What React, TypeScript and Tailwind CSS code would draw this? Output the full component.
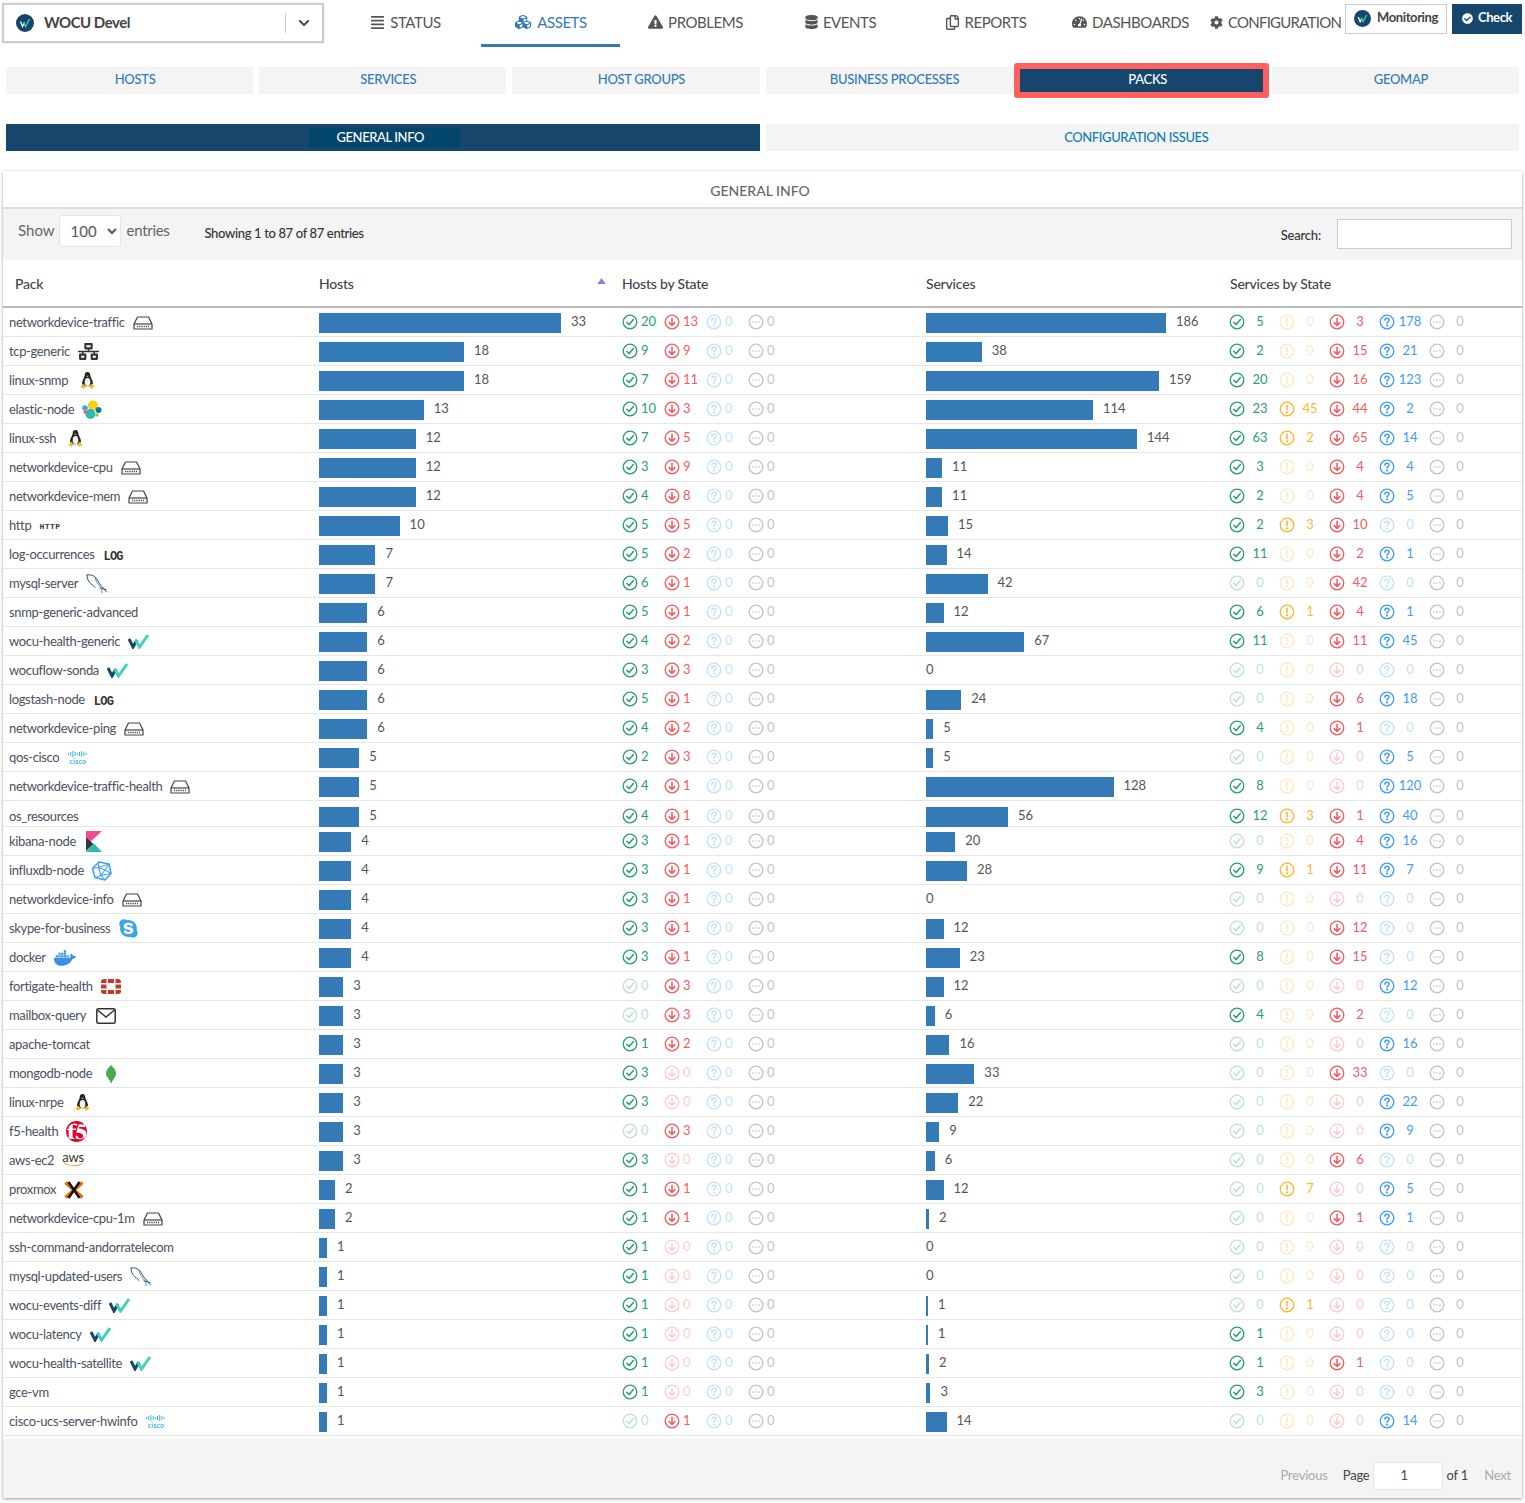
import type { ReactNode } from 'react';
import {
  FaAlignJustify,
  FaCubes,
  FaExclamationTriangle,
  FaDatabase,
  FaRegCopy,
  FaTachometerAlt,
  FaCog,
  FaCheckCircle,
  FaChevronDown,
  FaNetworkWired,
  FaSkype,
  FaDocker,
} from 'react-icons/fa';
import { SiF5 } from 'react-icons/si';

type Pack = {
  name: string;
  icon?: string;
  hosts: number;
  up: number;
  down: number;
  services: number;
  st: [number, number, number, number];
};

const row = (
  name: string,
  icon: string,
  hosts: number,
  up: number,
  down: number,
  services: number,
  ok = 0,
  warn = 0,
  crit = 0,
  unk = 0
): Pack => ({ name, icon, hosts, up, down, services, st: [ok, warn, crit, unk] });

const packs: Pack[] = [
  row('networkdevice-traffic', 'device', 33, 20, 13, 186, 5, 0, 3, 178),
  row('tcp-generic', 'network', 18, 9, 9, 38, 2, 0, 15, 21),
  row('linux-snmp', 'tux', 18, 7, 11, 159, 20, 0, 16, 123),
  row('elastic-node', 'elastic', 13, 10, 3, 114, 23, 45, 44, 2),
  row('linux-ssh', 'tux', 12, 7, 5, 144, 63, 2, 65, 14),
  row('networkdevice-cpu', 'device', 12, 3, 9, 11, 3, 0, 4, 4),
  row('networkdevice-mem', 'device', 12, 4, 8, 11, 2, 0, 4, 5),
  row('http', 'http', 10, 5, 5, 15, 2, 3, 10, 0),
  row('log-occurrences', 'log', 7, 5, 2, 14, 11, 0, 2, 1),
  row('mysql-server', 'mysql', 7, 6, 1, 42, 0, 0, 42, 0),
  row('snmp-generic-advanced', '', 6, 5, 1, 12, 6, 1, 4, 1),
  row('wocu-health-generic', 'wocu', 6, 4, 2, 67, 11, 0, 11, 45),
  row('wocuflow-sonda', 'wocu', 6, 3, 3, 0),
  row('logstash-node', 'log', 6, 5, 1, 24, 0, 0, 6, 18),
  row('networkdevice-ping', 'device', 6, 4, 2, 5, 4, 0, 1, 0),
  row('qos-cisco', 'cisco', 5, 2, 3, 5, 0, 0, 0, 5),
  row('networkdevice-traffic-health', 'device', 5, 4, 1, 128, 8, 0, 0, 120),
  row('os_resources', '', 5, 4, 1, 56, 12, 3, 1, 40),
  row('kibana-node', 'kibana', 4, 3, 1, 20, 0, 0, 4, 16),
  row('influxdb-node', 'influx', 4, 3, 1, 28, 9, 1, 11, 7),
  row('networkdevice-info', 'device', 4, 3, 1, 0),
  row('skype-for-business', 'skype', 4, 3, 1, 12, 0, 0, 12, 0),
  row('docker', 'docker', 4, 3, 1, 23, 8, 0, 15, 0),
  row('fortigate-health', 'fortigate', 3, 0, 3, 12, 0, 0, 0, 12),
  row('mailbox-query', 'mail', 3, 0, 3, 6, 4, 0, 2, 0),
  row('apache-tomcat', '', 3, 1, 2, 16, 0, 0, 0, 16),
  row('mongodb-node', 'leaf', 3, 3, 0, 33, 0, 0, 33, 0),
  row('linux-nrpe', 'tux', 3, 3, 0, 22, 0, 0, 0, 22),
  row('f5-health', 'f5', 3, 0, 3, 9, 0, 0, 0, 9),
  row('aws-ec2', 'aws', 3, 3, 0, 6, 0, 0, 6, 0),
  row('proxmox', 'proxmox', 2, 1, 1, 12, 0, 7, 0, 5),
  row('networkdevice-cpu-1m', 'device', 2, 1, 1, 2, 0, 0, 1, 1),
  row('ssh-command-andorratelecom', '', 1, 1, 0, 0),
  row('mysql-updated-users', 'mysql', 1, 1, 0, 0),
  row('wocu-events-diff', 'wocu', 1, 1, 0, 1, 0, 1, 0, 0),
  row('wocu-latency', 'wocu', 1, 1, 0, 1, 1, 0, 0, 0),
  row('wocu-health-satellite', 'wocu', 1, 1, 0, 2, 1, 0, 1, 0),
  row('gce-vm', '', 1, 1, 0, 3, 3, 0, 0, 0),
  row('cisco-ucs-server-hwinfo', 'cisco', 1, 0, 1, 14, 0, 0, 0, 14),
];

const OK = '#2a9d76';
const WARN = '#ffb52e';
const CRIT = '#f55a5f';
const UNK = '#3f9cf5';
const PENDING = '#c4c4c4';

function StateIcon({ kind }: { kind: 'ok' | 'warn' | 'crit' | 'unk' | 'pending' }) {
  return (
    <svg viewBox="0 0 16 16" className="w-4 h-4 shrink-0" fill="none" stroke="currentColor" strokeWidth="1.3" strokeLinecap="round" strokeLinejoin="round">
      <circle cx="8" cy="8" r="6.8" />
      {kind === 'ok' && <path d="M4.8 8.2l2.3 2.4 4.3-5" strokeWidth="1.5" />}
      {kind === 'warn' && (
        <>
          <path d="M8 4.2v4.6" strokeWidth="1.6" />
          <circle cx="8" cy="11.4" r=".5" />
        </>
      )}
      {kind === 'crit' && <path d="M8 4.2v7.2M5.2 8.6L8 11.4l2.8-2.8" strokeWidth="1.5" />}
      {kind === 'unk' && (
        <>
          <path d="M5.9 6.2c0-1.3 1-2 2.1-2s2.1.8 2.1 1.9c0 1.5-2.1 1.5-2.1 3.1" strokeWidth="1.5" />
          <circle cx="8" cy="11.6" r=".45" />
        </>
      )}
      {kind === 'pending' && <path d="M5 8h.01M8 8h.01M11 8h.01" strokeWidth="1.7" />}
    </svg>
  );
}

function HostState({ kind, color, value, faint }: { kind: 'ok' | 'crit' | 'unk' | 'pending'; color: string; value: number; faint: number }) {
  return (
    <span className="flex items-center gap-[3px] w-[42px]" style={{ color, opacity: value === 0 ? faint : 1 }}>
      <StateIcon kind={kind} />
      <span>{value}</span>
    </span>
  );
}

function ServiceState({ kind, color, value, faint }: { kind: 'ok' | 'warn' | 'crit' | 'unk' | 'pending'; color: string; value: number; faint: number }) {
  return (
    <span className="flex items-center w-[50px]" style={{ color, opacity: value === 0 ? faint : 1 }}>
      <StateIcon kind={kind} />
      <span className="w-[30px] text-center">{value}</span>
    </span>
  );
}

function DeviceIcon() {
  return (
    <svg viewBox="0 0 20 14" className="w-[20px] h-[14px]" fill="none" stroke="#444" strokeWidth="1.2">
      <path d="M4.5 1h11l3.5 7v5H1V8z" strokeLinejoin="round" />
      <path d="M1 8h18" />
      <path d="M4 10.5h12" strokeWidth="1.6" strokeDasharray="1.2 1" />
    </svg>
  );
}

function TuxIcon() {
  return (
    <svg viewBox="0 0 16 18" className="w-[15px] h-[17px]">
      <path d="M8 0c2.2 0 3 1.8 3 3.6 0 2 2.8 5 2.8 8 0 2-1.6 3.4-5.8 3.4s-5.800-1.400-5.800-3.400c0-3 2.800-6 2.800-8C5 1.800 5.800 0 8 0z" fill="#222" />
      <ellipse cx="8" cy="10.800" rx="3" ry="4.400" fill="#efefef" />
      <path d="M6.600 3.800h2.800L8 5.400z" fill="#f5b81f" />
      <path d="M.500 15.500l3.500-3 2 3.500-2.500 1.800zM15.500 15.500l-3.500-3-2 3.500 2.500 1.800z" fill="#f5b81f" />
    </svg>
  );
}

function ElasticIcon() {
  return (
    <svg viewBox="0 0 20 20" className="w-[20px] h-[20px]">
      <circle cx="11" cy="5.500" r="5" fill="#f7cf13" />
      <circle cx="8.500" cy="14" r="5" fill="#2fb8ac" />
      <circle cx="3" cy="8" r="2.800" fill="#3ea5dc" />
      <circle cx="3.200" cy="12" r="1.800" fill="#ee5097" />
      <circle cx="16.500" cy="10" r="3" fill="#1d6f9e" />
      <circle cx="15" cy="15" r="1.700" fill="#8cc63f" />
    </svg>
  );
}

function WocuIcon() {
  return (
    <svg viewBox="0 0 22 15" className="w-[22px] h-[15px]" fill="none" strokeWidth="3" strokeLinejoin="miter">
      <path d="M1 5l4 8 4-7" stroke="#17466c" />
      <path d="M7.500 6l4 7L20 1" stroke="#3fd3b6" />
    </svg>
  );
}

function MysqlIcon() {
  return (
    <svg viewBox="0 0 22 20" className="w-[22px] h-[20px]" fill="none" stroke="#2d5b78" strokeWidth="1" strokeLinecap="round" strokeLinejoin="round">
      <path d="M1 1c3-.5 6 0 8 2 3 2.500 3.500 6.500 6.500 9l5 6" />
      <path d="M1 1c0 3 1 5.500 2.500 7.500 1.500 2 4 2.500 5.500 5" />
      <path d="M9 3.500c1 4 3 7 6.500 11 .5 1 .5 2 .5 4.500" strokeWidth=".7" />
      <path d="M14 14l6 1.500" />
    </svg>
  );
}

function CiscoIcon() {
  const bars = [2, 4, 6, 4, 2, 4, 6, 4, 2];
  return (
    <span className="flex flex-col items-center gap-[1px] text-[#35b8e0]">
      <svg viewBox="0 0 21 6" className="w-[21px] h-[6px]" fill="currentColor">
        {bars.map((h, i) => (
          <rect key={i} x={1 + i * 2.2} y={(6 - h) / 2} width="1" height={h} />
        ))}
      </svg>
      <span className="text-[7px] leading-[6px] font-bold tracking-[0.2px]">cisco</span>
    </span>
  );
}

function KibanaIcon() {
  return (
    <svg viewBox="0 0 16 21" className="w-[16px] h-[21px]">
      <path d="M0 0h16L0 15z" fill="#ee4f93" />
      <path d="M0 6.500L7.500 13 0 20z" fill="#343741" />
      <path d="M0 21l8-8.500 8 8.500z" fill="#2fb8a6" />
    </svg>
  );
}

function InfluxIcon() {
  return (
    <svg viewBox="0 0 20 20" className="w-[20px] h-[20px]" fill="none" stroke="#3fa4f5" strokeWidth="1.100" strokeLinejoin="round">
      <path d="M7 1l10 2 2 9.500-6 6.500-10-2.500-2.500-9z" strokeWidth="1.600" />
      <path d="M7 1l-.500 5.500L17 3M6.500 6.500L.500 7.500M6.500 6.500l2.500 8 4 4.500M9 14.500l-6 2M9 14.500l10-2M6.500 6.500L13 9l4-6M13 9l6 3.500M13 9l-4 5.500" />
    </svg>
  );
}

function FortiIcon() {
  return (
    <svg viewBox="0 0 20 15" className="w-[20px] h-[15px]" fill="#c4392d">
      <path d="M0 3a3 3 0 0 1 3-3h2.500v4H0zM7 0h6v4H7zM14.500 0H17a3 3 0 0 1 3 3v1h-5.500zM0 5.500h5.500v4H0zM14.500 5.500H20v4h-5.500zM0 11h5.500v4H3a3 3 0 0 1-3-3zM7 11h6v4H7zM14.500 11H20v1a3 3 0 0 1-3 3h-2.500z" />
    </svg>
  );
}

function MailIcon() {
  return (
    <svg viewBox="0 0 20 16" className="w-[20px] h-[16px]" fill="none" stroke="#333" strokeWidth="1.500">
      <rect x=".8" y=".8" width="18.400" height="14.400" rx="1.500" />
      <path d="M1.500 2l8.500 7 8.500-7" />
    </svg>
  );
}

function LeafIcon() {
  return (
    <svg viewBox="0 0 10 18" className="w-[10px] h-[18px]">
      <path d="M5 0c3 3 5 5.500 5 8.500 0 3.500-3 5.500-4.500 9.500h-1C4 14 0 12 0 8.500 0 5.500 2 3 5 0z" fill="#4ba94f" />
    </svg>
  );
}

function ProxmoxIcon() {
  return (
    <svg viewBox="0 0 20 18" className="w-[20px] h-[18px]" fill="none" strokeWidth="3.600">
      <path d="M1.500 1.500l17 15M18.500 1.500l-17 15" stroke="#e57000" />
      <path d="M4.500 1l11 16M15.500 1l-11 16" stroke="#111" strokeWidth="2.400" />
    </svg>
  );
}

function AwsIcon() {
  return (
    <span className="flex flex-col items-center -mt-[3px]">
      <span className="text-[13px] text-[#333] leading-[10px] tracking-[-0.2px]">aws</span>
      <svg viewBox="0 0 22 5" className="w-[21px] h-[5px]" fill="none" stroke="#f59a23" strokeWidth="1.100">
        <path d="M1 .800c6 4 14 4 19.500.500" />
      </svg>
    </span>
  );
}

function PackIcon({ name }: { name?: string }) {
  const byName: Record<string, ReactNode> = {
    device: <DeviceIcon />,
    network: <FaNetworkWired className="w-[21px] h-[19px] text-[#333]" />,
    tux: <TuxIcon />,
    elastic: <ElasticIcon />,
    http: <span className="mt-[3px] text-[8px] font-black tracking-[0.5px] text-[#333] font-['Liberation_Mono',monospace]">HTTP</span>,
    log: <span className="mt-[4px] text-[12px] font-bold tracking-[-0.8px] text-[#333] font-['Liberation_Mono',monospace] leading-none">LOG</span>,
    mysql: <MysqlIcon />,
    wocu: <WocuIcon />,
    cisco: <CiscoIcon />,
    kibana: <KibanaIcon />,
    influx: <InfluxIcon />,
    skype: <FaSkype className="w-[21px] h-[21px] text-[#3aa6ea]" />,
    docker: <FaDocker className="w-[22px] h-[18px] text-[#3b8fe6]" />,
    fortigate: <FortiIcon />,
    mail: <MailIcon />,
    leaf: <LeafIcon />,
    f5: <SiF5 className="w-[21px] h-[21px] text-[#e4002b]" />,
    aws: <AwsIcon />,
    proxmox: <ProxmoxIcon />,
  };
  if (!name) return null;
  const gaps: Record<string, string> = {
    tux: 'ml-[12px]',
    kibana: 'ml-[10px]',
    leaf: 'ml-[14px]',
    mail: 'ml-[10px]',
    log: 'ml-[9px]',
  };
  return <span className={`inline-flex items-center ${gaps[name] ?? 'ml-[8px]'}`}>{byName[name]}</span>;
}

const navItems = [
  { label: 'STATUS', icon: <FaAlignJustify className="w-[15px] h-[15px]" /> },
  { label: 'ASSETS', icon: <FaCubes className="w-[18px] h-[16px]" />, active: true },
  { label: 'PROBLEMS', icon: <FaExclamationTriangle className="w-[15px] h-[14px]" /> },
  { label: 'EVENTS', icon: <FaDatabase className="w-[13px] h-[14px]" /> },
  { label: 'REPORTS', icon: <FaRegCopy className="w-[15px] h-[15px]" /> },
  { label: 'DASHBOARDS', icon: <FaTachometerAlt className="w-[15px] h-[14px]" /> },
  { label: 'CONFIGURATION', icon: <FaCog className="w-[13px] h-[13px]" />, tight: true },
];

const subTabs = ['HOSTS', 'SERVICES', 'HOST GROUPS', 'BUSINESS PROCESSES', 'PACKS', 'GEOMAP'];

function WocuRound({ size }: { size: string }) {
  return (
    <svg viewBox="0 0 18 18" className={size}>
      <circle cx="9" cy="9" r="9" fill="#17466c" />
      <path d="M4.500 7.500l2 5 2-4" fill="none" stroke="#fff" strokeWidth="1.300" />
      <path d="M7.500 8.500l2 4 4-7.500" fill="none" stroke="#3fd3b6" strokeWidth="1.300" />
    </svg>
  );
}

export default function App() {
  return (
    <div className="w-[1525px] h-[1503px] bg-white font-['Lato',sans-serif] text-[13px] text-[#555] overflow-hidden">
      <header className="flex items-start h-[47px]">
        <div className="ml-[2px] mt-[3px] w-[322px] h-[40px] border-[2px] border-[#ccc] shadow-[0_0_1px_#bbb] flex items-center">
          <WocuRound size="w-[18px] h-[18px] ml-[12px]" />
          <span className="ml-[10px] -mt-[2px] text-[15px] font-bold tracking-[-0.5px] text-[#444]">WOCU Devel</span>
          <span className="ml-auto w-px h-[20px] bg-[#ccc]" />
          <FaChevronDown className="w-[12px] h-[12px] text-[#444] mx-[12px]" />
        </div>
        <nav className="ml-[9px] grid grid-cols-[repeat(7,145px)] h-[47px]">
          {navItems.map((item) => (
            <a
              key={item.label}
              className={`mx-[3px] flex items-center justify-center gap-[5px] text-[15px] whitespace-nowrap border-b-[3px] ${
                item.tight ? 'tracking-[-0.75px]' : 'tracking-[-0.45px]'
              } ${item.active ? 'text-[#337ab7] border-[#337ab7]' : 'text-[#555] border-transparent'}`}
            >
              {item.icon}
              {item.label}
            </a>
          ))}
        </nav>
        <div className="flex -ml-[3px] mt-[4px] font-bold text-[13px] tracking-[-0.4px]">
          <a className="w-[102px] h-[30px] pb-[2px] border border-[#ccc] flex items-center justify-center gap-[6px] text-[#444]">
            <WocuRound size="w-[17px] h-[17px]" />
            Monitoring
          </a>
          <a className="ml-[5px] w-[70px] h-[30px] pb-[2px] bg-[#17466c] text-white flex items-center justify-center gap-[5px]">
            <FaCheckCircle className="w-[11px] h-[11px]" />
            Check
          </a>
        </div>
      </header>

      <div className="mt-[20px] mx-[6px] grid grid-cols-6 gap-[6px] tracking-[-0.3px]">
        {subTabs.map((tab) =>
          tab === 'PACKS' ? (
            <div key={tab} className="relative h-[27px] pl-[11px] pb-[2px] bg-[#17466c] text-white flex items-center justify-center font-medium">
              {tab}
              <span className="absolute -left-[5px] -right-[3px] -top-[4px] -bottom-[4px] border-[6px] border-[#ff5f5f] rounded-[3px]" />
            </div>
          ) : (
            <div key={tab} className="h-[27px] pl-[11px] pb-[2px] bg-[#f4f4f4] text-[#337ab7] flex items-center justify-center font-medium">
              {tab}
            </div>
          )
        )}
      </div>

      <div className="mt-[30px] mx-[6px] grid grid-cols-2 gap-[6px] tracking-[-0.4px] font-medium">
        <div className="h-[27px] bg-[#17466c] flex items-center justify-center">
          <span className="ml-[4px] w-[151px] h-[20px] bg-[#02466b] text-white flex items-center justify-center pr-[9px]">GENERAL INFO</span>
        </div>
        <div className="h-[27px] pr-[12px] bg-[#f4f4f4] text-[#0f7db5] flex items-center justify-center">CONFIGURATION ISSUES</div>
      </div>

      <section className="mt-[20px] mx-[3px] h-[1327px] bg-white shadow-[0_1px_3px_rgba(0,0,0,0.4)]">
        <div className="h-[38px] pt-[2px] pr-[5px] border-b-2 border-[#ddd] flex items-center justify-center text-[14px] font-medium text-[#666]">GENERAL INFO</div>

        <div className="h-[51px] bg-[#f4f4f4] flex items-center">
          <span className="ml-[15px] text-[15px] text-[#666] -mt-[9px]">Show</span>
          <select defaultValue="100" className="ml-[4px] w-[62px] h-[32px] -mt-[7px] bg-white border border-[#e5e5e5] rounded-[3px] text-[15px] text-[#555] pl-[7px]">
            <option value="100">100</option>
          </select>
          <span className="ml-[6px] text-[15px] tracking-[-0.3px] text-[#666] -mt-[9px]">entries</span>
          <span className="ml-[35px] -mt-[1px] text-[13px] tracking-[-0.35px] text-[#333] font-medium">Showing 1 to 87 of 87 entries</span>
          <span className="ml-auto text-[13px] tracking-[-0.2px] text-[#333] font-medium mt-[3px]">Search:</span>
          <input className="ml-[16px] mr-[10px] w-[175px] h-[30px] -mt-[2px] bg-white border border-[#ccc]" />
        </div>

        <div className="h-[48px] border-b-2 border-[#bbb] grid grid-cols-[310px_303px_304px_304px_1fr] items-center text-[14px] font-medium tracking-[-0.2px] text-[#444]">
          <span className="pl-[12px]">Pack</span>
          <span className="pl-[6px] relative">
            Hosts
            <svg viewBox="0 0 10 7" className="absolute right-[10px] top-[5px] w-[9px] h-[6px]">
              <path d="M5 0l5 7H0z" fill="#8383e0" />
            </svg>
          </span>
          <span className="pl-[6px]">Hosts by State</span>
          <span className="pl-[6px]">Services</span>
          <span className="pl-[6px]">Services by State</span>
        </div>

        {packs.map((p) => (
          <div
            key={p.name}
            className={`grid grid-cols-[310px_303px_304px_304px_1fr] items-center border-b border-[#e6e6e6] ${
              p.name === 'os_resources' ? 'h-[26px] pt-[4px]' : 'h-[29px]'
            }`}
          >
            <div className="pl-[6px] pt-[1px] flex items-center whitespace-nowrap tracking-[-0.35px] text-[#4a5160]">
              {p.name}
              <PackIcon name={p.icon} />
            </div>
            <div className="pl-[6px] flex items-center">
              <span className="h-[20px] mt-[2px] bg-[#337ab7]" style={{ width: Math.min(242, p.hosts * 8.06) }} />
              <span className="ml-[10px]">{p.hosts}</span>
            </div>
            <div className="pl-[6px] flex items-center -mt-[1px]">
              <HostState kind="ok" color={OK} value={p.up} faint={0.3} />
              <HostState kind="crit" color={CRIT} value={p.down} faint={0.3} />
              <HostState kind="unk" color={UNK} value={0} faint={0.3} />
              <HostState kind="pending" color={PENDING} value={0} faint={1} />
            </div>
            <div className="pl-[6px] flex items-center">
              {p.services > 0 && <span className="h-[20px] mt-[2px] bg-[#337ab7] mr-[10px]" style={{ width: Math.max(2, Math.min(240, p.services * 1.465)) }} />}
              <span>{p.services}</span>
            </div>
            <div className="pl-[5px] flex items-center -mt-[1px]">
              <ServiceState kind="ok" color={OK} value={p.st[0]} faint={0.3} />
              <ServiceState kind="warn" color={WARN} value={p.st[1]} faint={0.3} />
              <ServiceState kind="crit" color={CRIT} value={p.st[2]} faint={0.3} />
              <ServiceState kind="unk" color={UNK} value={p.st[3]} faint={0.3} />
              <ServiceState kind="pending" color={PENDING} value={0} faint={1} />
            </div>
          </div>
        ))}

        <div className="mt-[3px] h-[59px] pt-[15px] bg-[#f4f4f4] flex items-center justify-end text-[13px] tracking-[-0.2px]">
          <span className="text-[#aaa]">Previous</span>
          <span className="ml-[15px] text-[#444]">Page</span>
          <span className="ml-[3px] w-[70px] h-[28px] bg-white border border-[#e5e5e5] flex items-center pl-[27px] text-[#444]">1</span>
          <span className="ml-[4px] text-[#444]">of 1</span>
          <span className="ml-[16px] mr-[11px] text-[#aaa]">Next</span>
        </div>
      </section>
    </div>
  );
}
